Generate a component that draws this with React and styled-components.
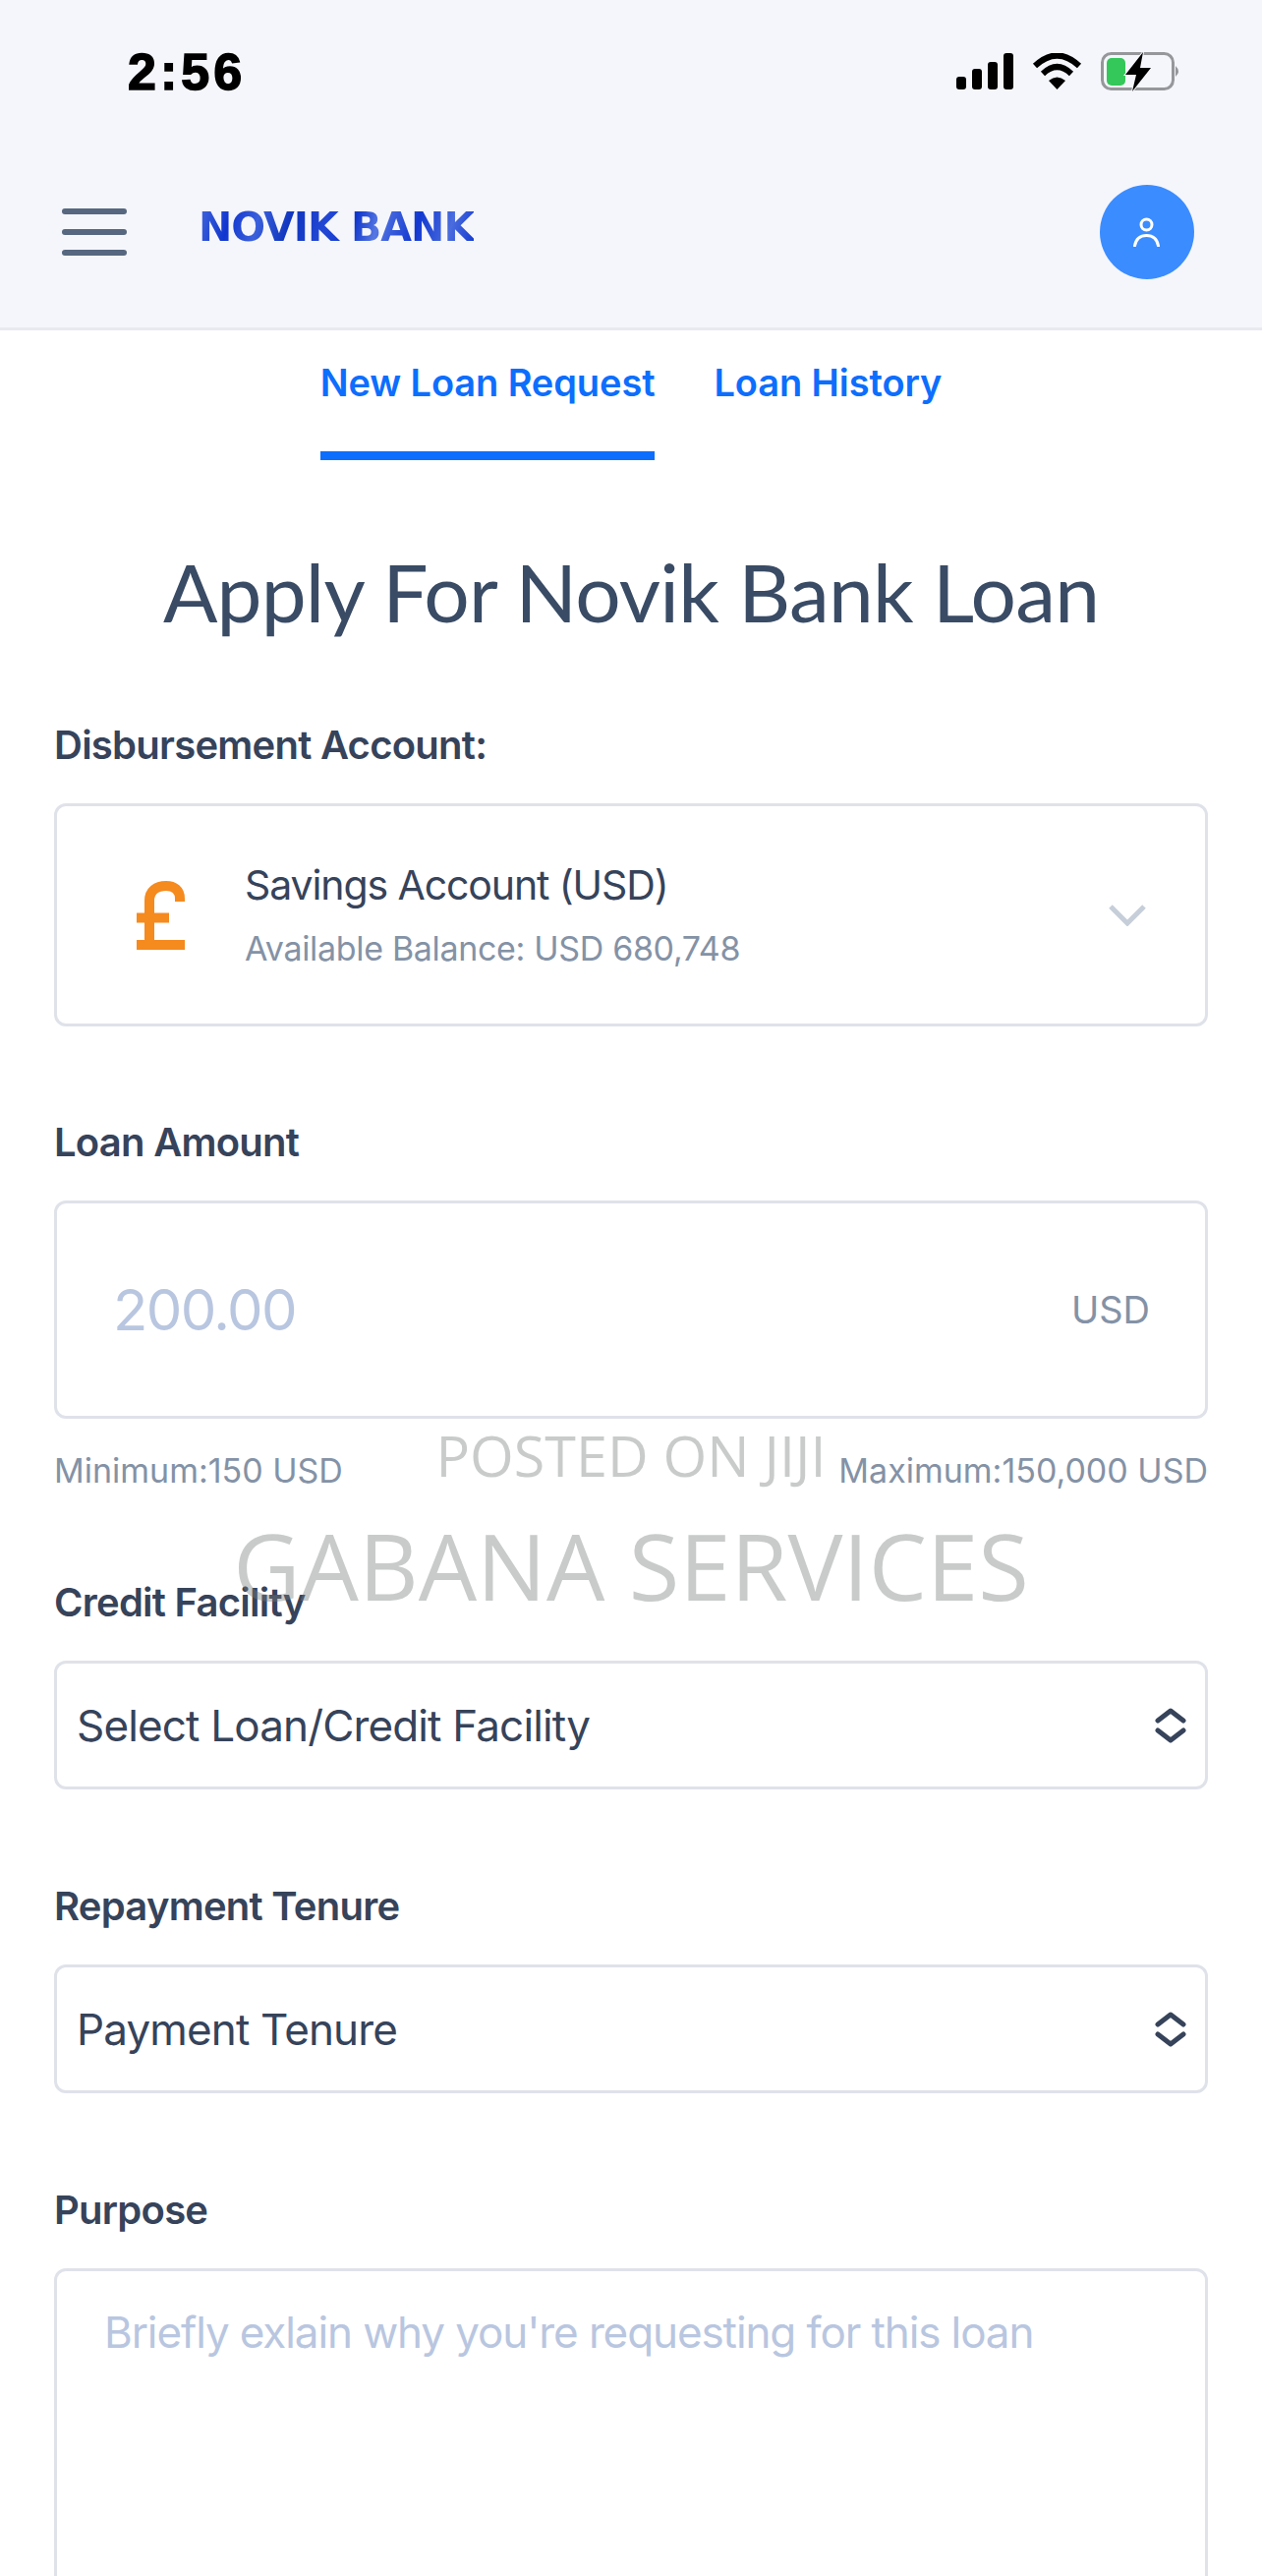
import React from "react";
import styled, { createGlobalStyle } from "styled-components";

const Global = createGlobalStyle`
  html, body {
    margin: 0;
    background: #fff;
  }
  * {
    box-sizing: border-box;
  }
`;

const App = () => {
  return (
    <Page>
      <Global />
      <Header>
        <StatusBar>
          <Time>2:56</Time>
          <StatusIcons>
            <svg width="58" height="38" viewBox="0 0 58 38">
              <rect x="0" y="24" width="10" height="13" rx="3" fill="#000" />
              <rect x="16" y="16" width="10" height="21" rx="3" fill="#000" />
              <rect x="32" y="9" width="10" height="28" rx="3" fill="#000" />
              <rect x="48" y="0" width="10" height="37" rx="3" fill="#000" />
            </svg>
            <svg width="51" height="38" viewBox="0 0 51 38">
              <path d="M3 13 Q25.5 -8 48 13" fill="none" stroke="#000" strokeWidth="6" />
              <path d="M11 21 Q25.5 7 40 21" fill="none" stroke="#000" strokeWidth="6" />
              <path d="M17 28 L25.5 37 L34 28 Q25.5 21 17 28 Z" fill="#000" />
            </svg>
            <svg width="82" height="42" viewBox="0 0 82 42">
              <rect x="1.5" y="2.5" width="72" height="36" rx="9" fill="none" stroke="#96979b" strokeWidth="3" />
              <rect x="6" y="7" width="19" height="28" rx="5" fill="#34c759" />
              <path d="M76 15 Q82 20.5 76 26 Z" fill="#96979b" />
              <path d="M43 1 L25 24 L36 24 L32 41 L51 17 L40 17 Z" fill="#000" stroke="#f5f6fb" strokeWidth="2" paintOrder="stroke" />
            </svg>
          </StatusIcons>
        </StatusBar>
        <NavBar>
          <Hamburger>
            <span />
            <span />
            <span />
          </Hamburger>
          <Logo>NOVIK BANK</Logo>
          <Avatar>
            <svg width="28" height="30" viewBox="0 0 28 30" fill="none" stroke="#fff" strokeWidth="3" strokeLinecap="round">
              <circle cx="13.5" cy="7.5" r="5.5" />
              <path d="M1.5 29 C3 21 8 18.5 13.5 18.5 C19 18.5 24 21 25.5 29" />
            </svg>
          </Avatar>
        </NavBar>
      </Header>

      <Tabs>
        <Tab $active>New Loan Request</Tab>
        <Tab>Loan History</Tab>
      </Tabs>

      <Title>Apply For Novik Bank Loan</Title>

      <Form>
        <Label $top={84}>Disbursement Account:</Label>
        <AccountCard>
          <Pound>
            <svg width="50" height="70" viewBox="0 0 50 70" fill="none" stroke="#f58a1f" strokeWidth="10">
              <path d="M44 21 V18 C44 9 38 5 30 5 C20 5 13 10 13 20 V62" />
              <path d="M0 37.5 H33" />
              <path d="M0 65 H49" />
            </svg>
          </Pound>
          <AccountText>
            <AccountName>Savings Account (USD)</AccountName>
            <AccountBalance>Available Balance: USD 680,748</AccountBalance>
          </AccountText>
          <svg width="38" height="22" viewBox="0 0 38 22" fill="none" stroke="#c6ced9" strokeWidth="5">
            <path d="M2 2 L19 19 L36 2" />
          </svg>
        </AccountCard>

        <Label $top={95}>Loan Amount</Label>
        <AmountBox>
          <AmountValue>200.00</AmountValue>
          <AmountUnit>USD</AmountUnit>
        </AmountBox>
        <Limits>
          <span>Minimum:150 USD</span>
          <span>Maximum:150,000 USD</span>
        </Limits>

        <Label $top={90}>Credit Facility</Label>
        <SelectBox>
          Select Loan/Credit Facility
          <UpDown />
        </SelectBox>

        <Label $top={96}>Repayment Tenure</Label>
        <SelectBox>
          Payment Tenure
          <UpDown />
        </SelectBox>

        <Label $top={96}>Purpose</Label>
        <TextBox>Briefly exlain why you're requesting for this loan</TextBox>
      </Form>

      <Watermark>
        <WatermarkTop>POSTED ON JIJI</WatermarkTop>
        <WatermarkName>GABANA SERVICES</WatermarkName>
      </Watermark>
    </Page>
  );
};

const UpDown = () => (
  <svg width="32" height="36" viewBox="0 0 32 36" fill="none" stroke="#36435a" strokeWidth="5" strokeLinecap="round" strokeLinejoin="round">
    <path d="M3 13 L16 3 L29 13" />
    <path d="M3 23 L16 33 L29 23" />
  </svg>
);

const Page = styled.div`
  position: relative;
  width: 1284px;
  height: 2620px;
  overflow: hidden;
  background: #fff;
  font-family: Inter, "Liberation Sans", sans-serif;
  color: #36435a;
`;

const Header = styled.header`
  height: 336px;
  background: #f5f6fb;
  border-bottom: 3px solid #e8eaef;
`;

const StatusBar = styled.div`
  display: flex;
  justify-content: space-between;
  align-items: center;
  height: 146px;
  padding: 0 82px 0 130px;
`;

const Time = styled.div`
  font-family: "Liberation Sans", Arial, sans-serif;
  font-size: 52px;
  font-weight: 700;
  color: #000;
  letter-spacing: 4px;
  -webkit-text-stroke: 1.5px #000;
`;

const StatusIcons = styled.div`
  display: flex;
  align-items: center;
  gap: 19px;
`;

const NavBar = styled.div`
  display: flex;
  align-items: center;
  padding: 42px 69px 0 63px;
`;

const Hamburger = styled.div`
  display: flex;
  flex-direction: column;
  gap: 15px;
  width: 66px;

  span {
    height: 6px;
    border-radius: 3px;
    background: #56677f;
  }
`;

const Logo = styled.div`
  margin: -10px auto 0 73px;
  font-family: "DejaVu Sans", sans-serif;
  font-size: 41px;
  line-height: 46px;
  font-weight: 700;
  letter-spacing: -1px;
  white-space: nowrap;
  background: linear-gradient(
    105deg,
    #4468dc 0%,
    #1136cf 12%,
    #3a60dc 22%,
    #0f34bd 34%,
    #2348d6 46%,
    #0f36cc 56%,
    #5577e2 64%,
    #1238d0 78%,
    #4a6cde 90%,
    #1238d0 100%
  );
  -webkit-background-clip: text;
  background-clip: text;
  color: transparent;
`;

const Avatar = styled.div`
  display: flex;
  align-items: center;
  justify-content: center;
  width: 96px;
  height: 96px;
  border-radius: 50%;
  background: #3b8cff;
`;

const Tabs = styled.nav`
  display: flex;
  justify-content: center;
  gap: 60px;
  height: 132px;
`;

const Tab = styled.div`
  height: 132px;
  padding-top: 30px;
  font-size: 38px;
  font-weight: 600;
  letter-spacing: -0.1px;
  color: #0d6efd;
  border-bottom: 9px solid ${(props) => (props.$active ? "#0d6efd" : "transparent")};
`;

const Title = styled.h1`
  margin: 83px 0 0;
  font-family: Lato, sans-serif;
  font-size: 82px;
  line-height: 100px;
  font-weight: 400;
  letter-spacing: -0.76px;
  text-align: center;
  color: #394b65;
`;

const Form = styled.div`
  padding: 0 55px;
`;

const Label = styled.div`
  margin-top: ${(props) => props.$top}px;
  margin-bottom: 36px;
  font-size: 40px;
  line-height: 46px;
  font-weight: 600;
  letter-spacing: -0.75px;
  color: #36435a;
`;

const Box = styled.div`
  background: #fff;
  border: 3px solid #e0e2ea;
  border-radius: 12px;
`;

const AccountCard = styled(Box)`
  display: flex;
  align-items: center;
  height: 227px;
  padding: 0 60px 0 81px;
`;

const Pound = styled.div`
  display: flex;
  margin-right: 60px;
`;

const AccountText = styled.div`
  flex: 1;
`;

const AccountName = styled.div`
  margin-top: -2px;
  font-size: 41px;
  line-height: 50px;
  letter-spacing: -1.1px;
`;

const AccountBalance = styled.div`
  margin-top: 20px;
  font-size: 34px;
  line-height: 40px;
  letter-spacing: -0.33px;
  color: #8492a6;
`;

const AmountBox = styled(Box)`
  display: flex;
  align-items: center;
  justify-content: space-between;
  height: 222px;
  padding: 0 56px 0 57px;
`;

const AmountValue = styled.div`
  font-size: 58px;
  letter-spacing: -1.6px;
  color: #b9c6e0;
`;

const AmountUnit = styled.div`
  font-size: 38px;
  color: #8492a6;
`;

const Limits = styled.div`
  display: flex;
  justify-content: space-between;
  margin-top: 32px;
  font-size: 34px;
  line-height: 42px;
  color: #8492a6;
`;

const SelectBox = styled(Box)`
  display: flex;
  align-items: center;
  justify-content: space-between;
  height: 131px;
  padding: 0 19px 0 20px;
  font-size: 44px;
  letter-spacing: -0.85px;
`;

const TextBox = styled(Box)`
  height: 500px;
  padding: 37px 48px;
  font-size: 44px;
  line-height: 50px;
  letter-spacing: -1.1px;
  color: #b9c6e0;
`;

const Watermark = styled.div`
  position: absolute;
  top: 1434px;
  left: 0;
  width: 100%;
  text-align: center;
  font-family: "Open Sans", sans-serif;
  color: rgba(120, 125, 125, 0.4);
  pointer-events: none;
`;

const WatermarkTop = styled.div`
  font-size: 57.5px;
  line-height: 92px;
`;

const WatermarkName = styled.div`
  margin-top: 6px;
  font-size: 94px;
  line-height: 120px;
`;

export default App;
